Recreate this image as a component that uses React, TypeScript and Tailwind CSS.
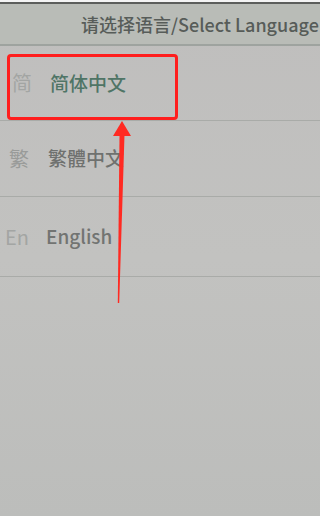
import React from "react";

const font = { fontFamily: '"Noto Sans CJK SC", "Noto Sans", sans-serif' };

function Row({ icon, label, labelClass, iconClass, h, pl, ml }: { icon: string; label: string; labelClass: string; iconClass: string; h: string; pl: string; ml: string }) {
  return (
    <div className={`flex items-center border-b border-[#a9aba8] ${h}`}>
      <span className={`w-[40px] text-[20px] ${iconClass} ${pl}`}>{icon}</span>
      <span className={`text-[19px] font-medium ${labelClass} ${ml}`}>{label}</span>
    </div>
  );
}

export default function App() {
  return (
    <div className="relative w-[320px] h-[516px] overflow-hidden bg-gradient-to-b from-[#bfbebd] via-[#c2c2c0] to-[#bcbdbb]" style={font}>
      <div className="h-[2px] bg-[#f4f4f4]" />
      <div className="h-[2px] bg-[#5c5e5c]" />
      <div className="flex h-[42px] items-center border-b-2 border-[#9ea39f] bg-[#b9bcb7] pl-[81px] whitespace-nowrap">
        <span className="text-[18px] font-medium text-[#575c59]">请选择语言/Select Language</span>
      </div>
      <Row icon="简" label="简体中文" h="h-[75px]" pl="pl-[12px]" ml="ml-[10px]" iconClass="text-[#a3a5a3]" labelClass="text-[#4f7566]" />
      <Row icon="繁" label="繁體中文" h="h-[76px]" pl="pl-[9px]" ml="ml-[8px]" iconClass="text-[#999b99]" labelClass="text-[#6f716f]" />
      <Row icon="En" label="English" h="h-[80px]" pl="pl-[5px]" ml="ml-[6px]" iconClass="text-[#a3a5a3]" labelClass="text-[#727472]" />

      <div className="absolute left-[7px] top-[54px] w-[171px] h-[66px] rounded-[4px] border-[3px] border-[#ff1e1e]" />
      <svg className="absolute left-0 top-0" width="320" height="516" viewBox="0 0 320 516">
        <polygon points="122,121 113,136 131,136" fill="#ff2a22" />
        <polygon points="119.5,135 124.5,135 119.2,303 117.8,303" fill="#ff2a22" />
      </svg>
    </div>
  );
}
